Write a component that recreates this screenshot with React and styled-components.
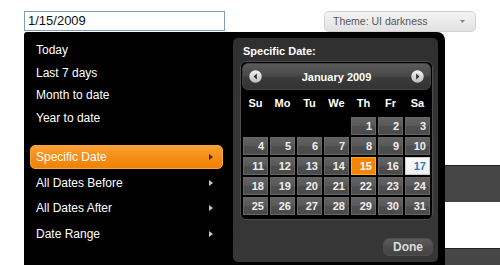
import React from "react";
import styled, { createGlobalStyle } from "styled-components";

const Global = createGlobalStyle`
  html, body { margin: 0; padding: 0; background: #fff; overflow: hidden; }
  body { font-family: "Liberation Sans", Arial, sans-serif; }
  * { box-sizing: border-box; }
`;

const Page = styled.div`
  width: 500px;
  height: 265px;
  display: flex;
  flex-direction: column;
`;

const TopBar = styled.div`
  height: 32px;
  padding: 11px 0 0 24px;
  display: flex;
  align-items: flex-start;
`;

const DateInput = styled.div`
  width: 201px;
  height: 20px;
  border: 1px solid #7f9db9;
  background: #fff;
  color: #111;
  font-size: 13px;
  line-height: 18px;
  padding-left: 3px;
`;

const ThemeSelect = styled.div`
  margin-left: 99px;
  width: 152px;
  height: 21px;
  border: 1px solid #d0d0d0;
  border-radius: 5px;
  background: linear-gradient(#f4f4f4, #e2e2e2);
  color: #555;
  font-size: 10.5px;
  line-height: 19px;
  padding: 0 10px 0 8px;
  display: flex;
  align-items: center;
  justify-content: space-between;
`;

const Main = styled.div`
  display: flex;
  flex: 1;
`;

const Panel = styled.div`
  margin-left: 24px;
  width: 421px;
  height: 240px;
  flex-shrink: 0;
  background: #000;
  border-radius: 3px 8px 0 0;
  padding-top: 6px;
  display: flex;
  align-items: flex-start;
`;

const Menu = styled.div`
  width: 209px;
  padding-top: 1px;
  display: flex;
  flex-direction: column;
`;

const Group = styled.div`
  display: flex;
  flex-direction: column;
  margin-top: ${(p) => p.$gap || 0}px;
`;

const Item = styled.div`
  width: 193px;
  margin-left: 6px;
  height: ${(p) => p.$h}px;
  margin-bottom: ${(p) => p.$mb || 0}px;
  padding: 0 9px 0 5px;
  display: flex;
  align-items: center;
  justify-content: space-between;
  color: #fff;
  font-size: 12px;
  border-radius: 5px;
  border: 1px solid ${(p) => (p.$active ? "#f9a53a" : "transparent")};
  background: ${(p) =>
    p.$active ? "linear-gradient(#f9a133, #f48a10 60%, #f08306)" : "transparent"};
`;

const Arrow = styled.span`
  width: 0;
  height: 0;
  border-top: 3.5px solid transparent;
  border-bottom: 3.5px solid transparent;
  border-left: 4px solid ${(p) => (p.$dark ? "#3a2a10" : "#c8c8c8")};
`;

const DatePane = styled.div`
  width: 205px;
  height: 224px;
  background: linear-gradient(#2f2f2f, #353535 40%, #363636);
  border-radius: 5px;
  padding: 0 5px 6px 7px;
  display: flex;
  flex-direction: column;
`;

const PaneLabel = styled.div`
  color: #fff;
  font-weight: bold;
  font-size: 11px;
  line-height: 16px;
  padding: 5px 0 0 3px;
  margin-bottom: 2px;
`;

const CalBox = styled.div`
  width: 193px;
  border: 1px solid #4c4c4c;
  border-radius: 6px;
  padding: 1px;
  background: #000;
`;

const CalHeader = styled.div`
  height: 27px;
  border: 1px solid #444;
  border-radius: 6px;
  background: linear-gradient(#5a5a5a, #4a4a4a 45%, #3a3a3a 55%, #333);
  display: flex;
  align-items: center;
  justify-content: space-between;
  padding: 0 6px;
  color: #fff;
  font-weight: bold;
  font-size: 11px;
`;

const NavBtn = styled.svg`
  display: block;
`;

const WeekRow = styled.div`
  height: 25px;
  display: grid;
  grid-template-columns: repeat(7, 1fr);
  column-gap: 2px;
  padding: 0 1px;
  align-items: center;
  color: #fff;
  font-weight: bold;
  font-size: 11px;
  text-align: center;
`;

const DayGrid = styled.div`
  margin: 2px 0 3px;
  padding: 0 1px;
  display: grid;
  grid-template-columns: repeat(7, 1fr);
  grid-auto-rows: 18px;
  gap: 2px;
`;

const Day = styled.div`
  border: 1px solid
    ${(p) => (p.$kind === "active" ? "#ffaf0f" : p.$kind === "hl" ? "#ccc" : "#666")};
  background: ${(p) =>
    p.$kind === "active"
      ? "#f58400"
      : p.$kind === "hl"
      ? "linear-gradient(#fafafa, #eeeeee)"
      : "linear-gradient(#626262, #585858 50%, #4e4e4e 52%, #4b4b4b)"};
  color: ${(p) => (p.$kind === "active" ? "#fff" : p.$kind === "hl" ? "#2e7db2" : "#eee")};
  font-weight: bold;
  font-size: 11px;
  line-height: 16px;
  text-align: right;
  padding-right: 3px;
`;

const Blank = styled.div``;

const DoneBtn = styled.div`
  margin-top: auto;
  align-self: flex-end;
  width: 50px;
  height: 18px;
  border-radius: 6px;
  border: 1px solid #4e4e4e;
  background: linear-gradient(#5c5c5c, #4c4c4c 50%, #444);
  color: #ddd;
  font-weight: bold;
  font-size: 12px;
  line-height: 16px;
  text-align: center;
`;

const Backdrop = styled.div`
  flex: 1;
  display: flex;
  flex-direction: column;
  padding-top: 133px;
`;

const Bar = styled.div`
  height: ${(p) => p.$h}px;
  background: #464646;
  border-top: 1px solid #222;
`;

const Spacer = styled.div`
  height: ${(p) => p.$h}px;
`;

const Nav = ({ dir }) => (
  <NavBtn width="13" height="13" viewBox="0 0 13 13">
    <defs>
      <linearGradient id={`g${dir}`} x1="0" y1="0" x2="0" y2="1">
        <stop offset="0" stopColor="#f2f2f2" />
        <stop offset="1" stopColor="#bdbdbd" />
      </linearGradient>
    </defs>
    <circle cx="6.5" cy="6.5" r="6.2" fill={`url(#g${dir})`} />
    {dir === "prev" ? (
      <path d="M7.8 3.6 L4.6 6.5 L7.8 9.4 Z" fill="#2a2a2a" />
    ) : (
      <path d="M5.2 3.6 L8.4 6.5 L5.2 9.4 Z" fill="#2a2a2a" />
    )}
  </NavBtn>
);

const days = [];
for (let i = 0; i < 4; i++) days.push(null);
for (let d = 1; d <= 31; d++) days.push(d);

export default function App() {
  return (
    <Page>
      <Global />
      <TopBar>
        <DateInput>1/15/2009</DateInput>
        <ThemeSelect>
          <span>Theme: UI darkness</span>
          <svg width="5" height="3" viewBox="0 0 5 3">
            <path d="M0 0 L5 0 L2.5 3 Z" fill="#888" />
          </svg>
        </ThemeSelect>
      </TopBar>
      <Main>
        <Panel>
          <Menu>
            <Group>
              {["Today", "Last 7 days", "Month to date", "Year to date"].map((t) => (
                <Item key={t} $h={22.5}>
                  {t}
                </Item>
              ))}
            </Group>
            <Group $gap={16}>
              {["Specific Date", "All Dates Before", "All Dates After", "Date Range"].map(
                (t, i) => (
                  <Item key={t} $h={24} $mb={1.5} $active={i === 0}>
                    <span>{t}</span>
                    <Arrow $dark={i === 0} />
                  </Item>
                )
              )}
            </Group>
          </Menu>
          <DatePane>
            <PaneLabel>Specific Date:</PaneLabel>
            <CalBox>
              <CalHeader>
                <Nav dir="prev" />
                <span>January 2009</span>
                <Nav dir="next" />
              </CalHeader>
              <WeekRow>
                {["Su", "Mo", "Tu", "We", "Th", "Fr", "Sa"].map((d) => (
                  <span key={d}>{d}</span>
                ))}
              </WeekRow>
              <DayGrid>
                {days.map((d, i) =>
                  d === null ? (
                    <Blank key={`b${i}`} />
                  ) : (
                    <Day key={d} $kind={d === 15 ? "active" : d === 17 ? "hl" : "n"}>
                      {d}
                    </Day>
                  )
                )}
              </DayGrid>
            </CalBox>
            <DoneBtn>Done</DoneBtn>
          </DatePane>
        </Panel>
        <Backdrop>
          <Bar $h={37} />
          <Spacer $h={46} />
          <Bar $h={30} />
        </Backdrop>
      </Main>
    </Page>
  );
}
